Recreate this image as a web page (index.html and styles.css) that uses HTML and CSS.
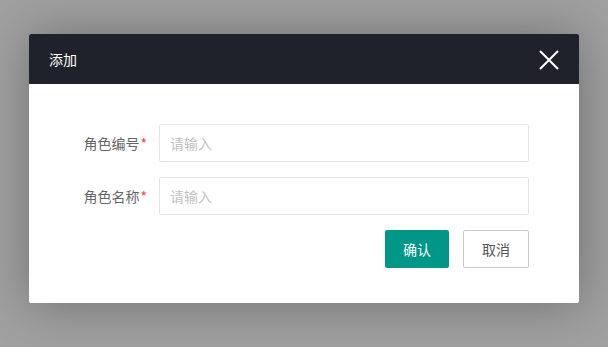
FILE: index.html
```html
<!DOCTYPE html>
<html lang="zh-CN">
<head>
    <meta charset="UTF-8">
    <meta name="viewport" content="width=device-width, initial-scale=1.0">
    <title>添加角色</title>
    <link rel="stylesheet" href="styles.css">
</head>
<body>
    <div class="dialog">
        <div class="dialog-header">
            <span class="dialog-title">添加</span>
            <span class="dialog-close">
                <svg width="20" height="20" viewBox="0 0 20 20">
                    <path d="M1 1 L19 19 M19 1 L1 19" stroke="#ffffff" stroke-width="2" fill="none"/>
                </svg>
            </span>
        </div>

        <form class="dialog-body">
            <div class="form-row">
                <label class="form-label" for="roleCode">角色编号<span class="required">*</span></label>
                <input class="form-input" type="text" id="roleCode" placeholder="请输入">
            </div>
            <div class="form-row">
                <label class="form-label" for="roleName">角色名称<span class="required">*</span></label>
                <input class="form-input" type="text" id="roleName" placeholder="请输入">
            </div>
            <div class="form-actions">
                <button type="button" class="btn btn-primary">确认</button>
                <button type="button" class="btn btn-default">取消</button>
            </div>
        </form>
    </div>
</body>
</html>
```

FILE: styles.css
```css
body {
    margin: 0;
    padding: 0;
    height: 347px;
    overflow: hidden;
    background-color: #a0a0a0;
    font-family: "Noto Sans CJK SC", "Liberation Sans", sans-serif;
    font-size: 14px;
}

.dialog {
    width: 550px;
    margin: 34px auto 0;
    background: white;
    border-radius: 2px;
    box-shadow: 1px 1px 50px rgba(0, 0, 0, 0.3);
    overflow: hidden;
}

.dialog-header {
    height: 50px;
    padding: 0 20px;
    background-color: #1f222b;
    color: white;
    display: flex;
    align-items: center;
    justify-content: space-between;
}

.dialog-title {
    font-size: 14px;
    line-height: 20px;
}

.dialog-close {
    display: flex;
    width: 20px;
    height: 20px;
    margin-top: 2px;
}

.dialog-body {
    padding: 40px 50px 35px 0;
    margin: 0;
}

.form-row {
    display: flex;
    align-items: center;
    margin-bottom: 15px;
}

.form-label {
    width: 130px;
    box-sizing: border-box;
    padding-right: 12px;
    text-align: right;
    color: #666;
    line-height: 20px;
}

.required {
    color: #ff3b30;
    margin-left: 1px;
}

.form-input {
    width: 370px;
    height: 38px;
    box-sizing: border-box;
    border: 1px solid #e6e6e6;
    border-radius: 2px;
    padding: 0 10px;
    font-family: inherit;
    font-size: 14px;
    color: #333;
    outline: none;
}

.form-input::placeholder {
    color: #c2c2c2;
}

.form-actions {
    display: flex;
    justify-content: flex-end;
    gap: 14px;
}

.btn {
    height: 38px;
    box-sizing: border-box;
    padding: 0 18px;
    border-radius: 2px;
    font-family: inherit;
    font-size: 14px;
    cursor: pointer;
}

.btn-primary {
    background-color: #009688;
    color: white;
    border: none;
    width: 64px;
}

.btn-default {
    background-color: white;
    color: #555;
    border: 1px solid #c9c9c9;
    width: 66px;
}
```
